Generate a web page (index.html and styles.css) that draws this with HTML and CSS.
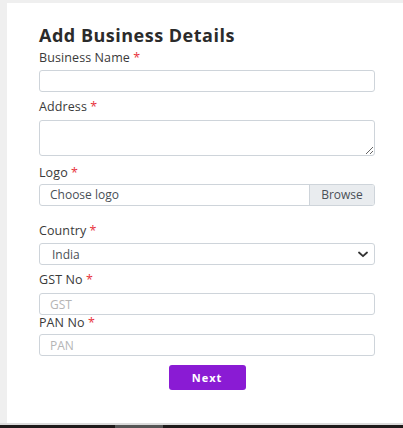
FILE: index.html
```html
<!DOCTYPE html>
<html>
<head>
<meta charset="utf-8">
<link rel="stylesheet" href="styles.css">
</head>
<body>
<div class="page">
  <div class="card">
    <h2 class="title">Add Business Details</h2>
    <div class="field f-name">
      <label class="lbl">Business Name <span class="req">*</span></label>
      <input class="ctl" type="text">
    </div>
    <div class="field f-addr">
      <label class="lbl">Address <span class="req">*</span></label>
      <textarea class="ctl area"></textarea>
    </div>
    <div class="field f-logo">
      <label class="lbl">Logo <span class="req">*</span></label>
      <div class="file">
        <span class="file-text">Choose logo</span>
        <span class="file-btn">Browse</span>
      </div>
    </div>
    <div class="field f-country">
      <label class="lbl">Country <span class="req">*</span></label>
      <div class="select-wrap">
        <select class="ctl sel"><option>India</option></select>
        <svg class="chev" width="10" height="7" viewBox="0 0 10 7"><path d="M1 1.5 L5 5.2 L9 1.5" fill="none" stroke="#333" stroke-width="1.8" stroke-linecap="round" stroke-linejoin="round"/></svg>
      </div>
    </div>
    <div class="field f-gst">
      <label class="lbl">GST No <span class="req">*</span></label>
      <input class="ctl" type="text" placeholder="GST">
    </div>
    <div class="field f-pan">
      <label class="lbl">PAN No <span class="req">*</span></label>
      <input class="ctl" type="text" placeholder="PAN">
    </div>
    <div class="actions">
      <button class="next">Next</button>
    </div>
  </div>
  <div class="sep"></div>
  <div class="taskbar"><span class="seg"></span></div>
</div>
</body>
</html>
```
FILE: styles.css
```css
* { box-sizing: border-box; }
html, body { margin: 0; padding: 0; }
body {
  background: #efefef;
  font-family: "Open Sans", "Liberation Sans", sans-serif;
  color: #333;
  width: 403px;
  height: 428px;
  overflow: hidden;
}
.page {
  padding-top: 3px;
}
.card {
  margin-left: 7px;
  background: #fff;
  height: 420px;
  padding: 21px 28px 0 32px;
}
.title {
  margin: 0;
  font-size: 18px;
  line-height: 22px;
  font-weight: 700;
  color: #2b2b2b;
  letter-spacing: 0.5px;
}
.field { display: flex; flex-direction: column; }
.lbl {
  font-size: 12.5px;
  line-height: 16px;
  color: #3a3a3a;
  letter-spacing: 0.1px;
}
.req { color: #e8323c; }
.ctl {
  display: block;
  width: 100%;
  height: 22px;
  border: 1px solid #ced4da;
  border-radius: 3px;
  background: #fff;
  font-family: "Open Sans", "Liberation Sans", sans-serif;
  font-size: 12px;
  color: #495057;
  padding: 0 10px;
  outline: none;
}
.ctl::placeholder { color: #b5b5b5; }
.f-name { margin-top: 4px; }
.f-name .lbl { margin-bottom: 4px; }
.f-addr { margin-top: 7px; }
.f-addr .lbl { margin-bottom: 5px; }
.area { height: 36px; resize: vertical; padding: 4px 10px; }
.f-logo { margin-top: 9px; }
.f-logo .lbl { margin-bottom: 3px; }
.file {
  display: flex;
  height: 22px;
  border: 1px solid #ced4da;
  border-radius: 3px;
  overflow: hidden;
  font-size: 12px;
  color: #495057;
}
.file-text {
  flex: 1;
  padding-left: 10px;
  line-height: 20px;
}
.file-btn {
  width: 65px;
  background: #e9ecef;
  border-left: 1px solid #ced4da;
  text-align: center;
  line-height: 20px;
}
.f-country { margin-top: 17px; }
.f-country .lbl { margin-bottom: 4px; }
.select-wrap { position: relative; }
.sel {
  appearance: none;
  -webkit-appearance: none;
  padding-left: 12px;
}
.chev {
  position: absolute;
  right: 7px;
  top: 8px;
}
.f-gst { margin-top: 7px; }
.f-gst .lbl { margin-bottom: 5px; }
.f-pan { margin-top: 0; }
.f-pan .lbl { margin-bottom: 3px; }
.actions {
  display: flex;
  justify-content: center;
  margin-top: 9px;
}
.next {
  width: 77px;
  height: 25px;
  border: none;
  border-radius: 3px;
  background: #8a1bd4;
  color: #fff;
  font-family: "Open Sans", "Liberation Sans", sans-serif;
  font-size: 11px;
  font-weight: 700;
  letter-spacing: 1px;
}
.sep { height: 2px; background: #dcdcdc; margin-left: 0; }
.taskbar {
  height: 3px;
  background: #1e1a1a;
  display: flex;
}
.seg {
  margin-left: 115px;
  width: 48px;
  background: #555;
}
```
